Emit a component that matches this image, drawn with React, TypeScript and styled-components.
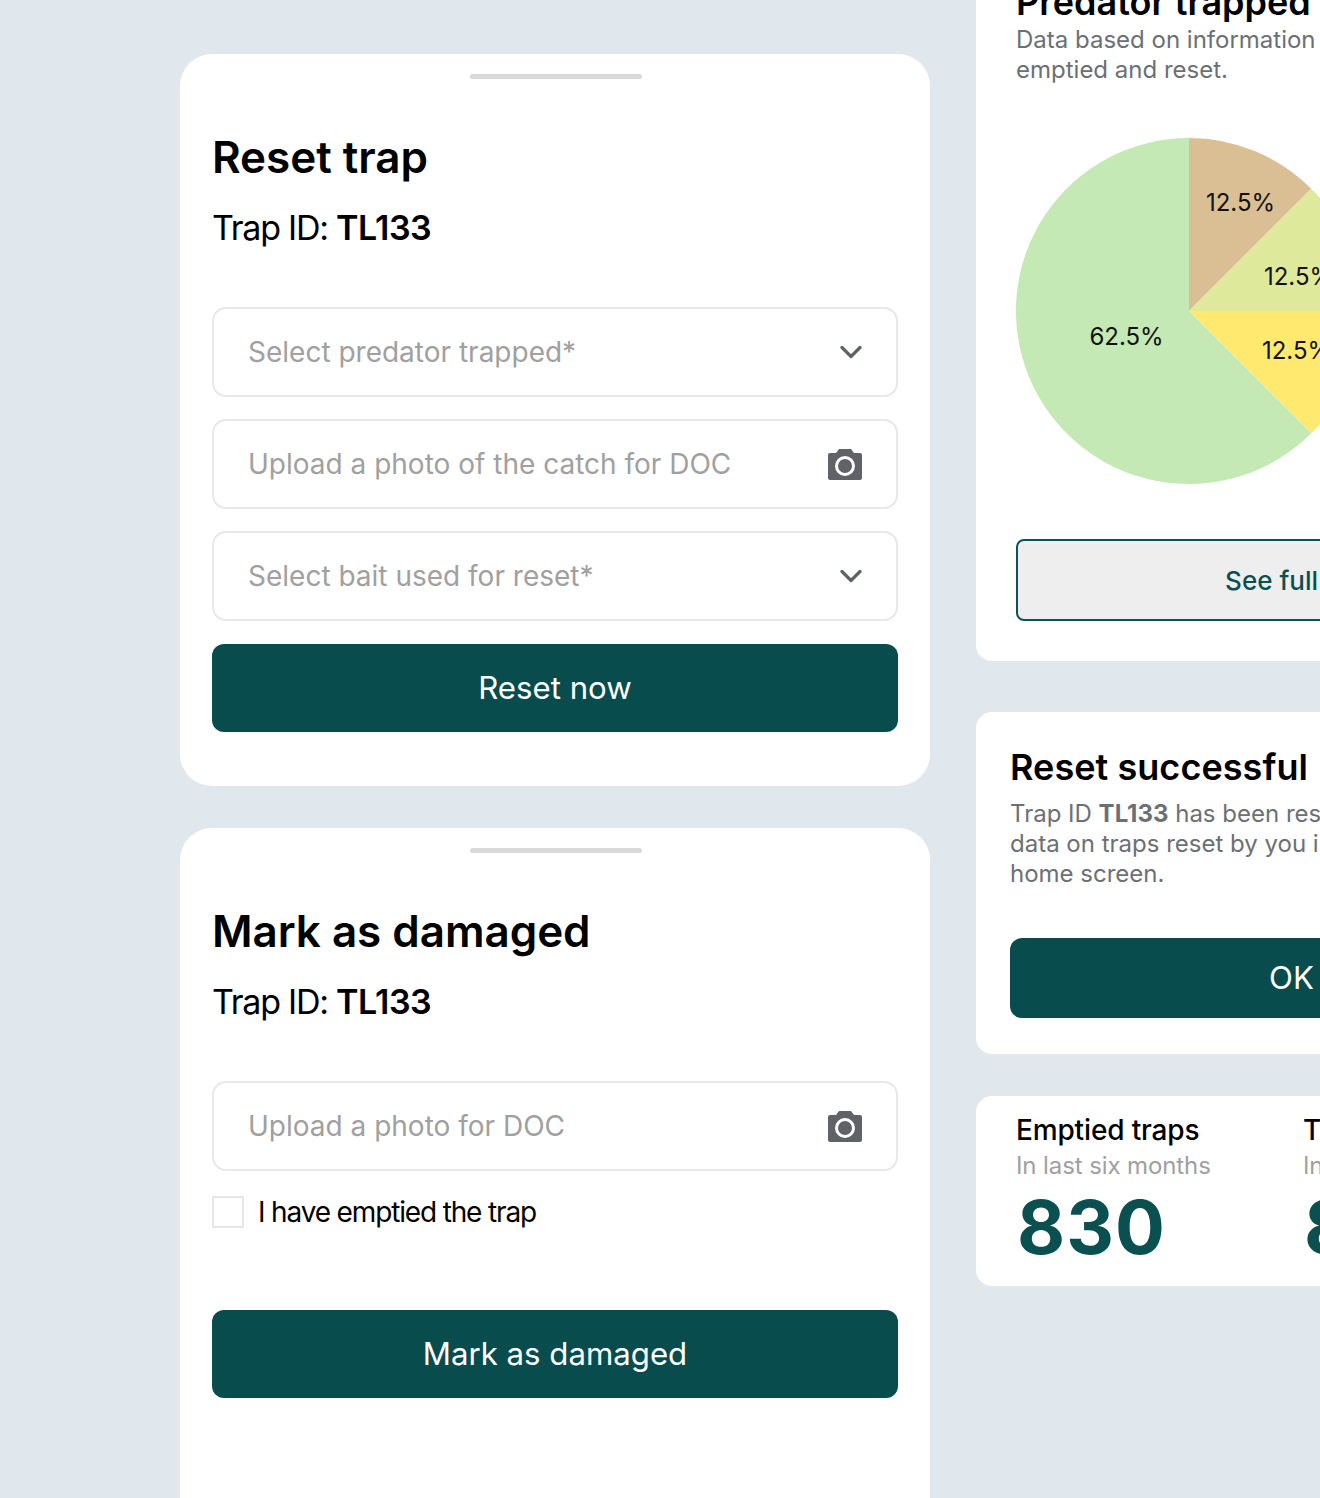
import React from "react"
import styled, { createGlobalStyle } from "styled-components"

const GlobalStyle = createGlobalStyle`
  html, body {
    margin: 0;
    background: #e0e8ee;
  }
  body {
    font-family: Inter, "Liberation Sans", sans-serif;
    color: #000;
  }
`

const Page = styled.div`
  display: flex;
  align-items: flex-start;
  gap: 46px;
  box-sizing: border-box;
  width: 1320px;
  height: 1498px;
  padding-left: 180px;
  overflow: hidden;
`

const LeftColumn = styled.div`
  display: flex;
  flex: none;
  flex-direction: column;
  gap: 42px;
  width: 750px;
  padding-top: 54px;
`

const Sheet = styled.section<{ $open?: boolean }>`
  box-sizing: border-box;
  min-height: ${props => (props.$open ? "760px" : "auto")};
  padding: 20px 32px 54px;
  background: #fff;
  border-radius: 32px;
`

const Handle = styled.div`
  width: 172px;
  height: 5px;
  margin-left: 258px;
  background: #d9d9d9;
  border-radius: 3px;
`

const SheetTitle = styled.h2`
  margin: 52px 0 0;
  font-size: 44px;
  font-weight: 600;
  line-height: 52px;
  letter-spacing: -0.05px;
`

const TrapId = styled.p`
  margin: 23px 0 57px;
  font-size: 34px;
  font-weight: 400;
  line-height: 44px;
  letter-spacing: -1.25px;

  b {
    font-weight: 600;
    letter-spacing: -0.55px;
  }
`

const Fields = styled.div`
  display: flex;
  flex-direction: column;
  gap: 24px;
`

const Field = styled.div`
  display: flex;
  align-items: center;
  justify-content: space-between;
  box-sizing: border-box;
  height: 90px;
  margin-bottom: -2px;
  padding: 0 34px;
  font-size: 28px;
  color: #a0a0a0;
  border: 2px solid #e8e8e8;
  border-radius: 14px;
`

const PrimaryButton = styled.div<{ $height: number; $width?: number; $top?: number }>`
  display: flex;
  flex: none;
  align-items: center;
  justify-content: center;
  box-sizing: border-box;
  width: ${props => (props.$width ? `${props.$width}px` : "100%")};
  height: ${props => props.$height}px;
  margin-top: ${props => props.$top ?? 0}px;
  font-size: 31.2px;
  color: #fff;
  background: #084c4e;
  border-radius: 12px;
`

const CheckRow = styled.label`
  display: flex;
  align-items: center;
  gap: 14px;
  height: 32px;
  margin-top: 27px;
  font-size: 28px;
  letter-spacing: -1.15px;
`

const CheckBox = styled.span`
  flex: none;
  box-sizing: border-box;
  width: 32px;
  height: 32px;
  border: 2px solid #e6e6e6;
`

const RightColumn = styled.div`
  display: flex;
  flex: none;
  flex-direction: column;
  gap: 51px;
  width: 680px;
  margin-top: -60px;
`

const ChartCard = styled.section`
  box-sizing: border-box;
  height: 721px;
  padding: 40px;
  background: #fff;
  border-radius: 16px;
`

const ChartTitle = styled.h2`
  margin: 0;
  font-size: 36px;
  font-weight: 600;
  line-height: 44px;
`

const Muted = styled.p`
  margin: 0;
  font-size: 24px;
  line-height: 30px;
  color: #6b7075;

  b {
    font-weight: 700;
  }
`

const ChartLead = styled(Muted)`
  margin-top: 1px;
`

const Pie = styled.svg`
  display: block;
  width: 346px;
  height: 346px;
  margin-top: 53px;
  overflow: visible;

  text {
    font-family: Inter, "Liberation Sans", sans-serif;
    font-size: 24px;
    fill: #111;
    text-anchor: middle;
  }
`

const OutlineButton = styled.div`
  display: flex;
  align-items: center;
  justify-content: center;
  box-sizing: border-box;
  width: 594px;
  height: 82px;
  margin-top: 55px;
  font-size: 26px;
  font-weight: 500;
  color: #0a5052;
  background: #eeeeee;
  border: 2px solid #0d5257;
  border-radius: 8px;
`

const SuccessCard = styled.section`
  display: flex;
  flex-direction: column;
  box-sizing: border-box;
  height: 342px;
  padding: 33px 34px;
  background: #fff;
  border-radius: 16px;
`

const SuccessTitle = styled.h2`
  margin: 0;
  font-size: 36px;
  font-weight: 600;
  line-height: 44px;
  letter-spacing: 0.05px;
`

const SuccessBody = styled(Muted)`
  margin-top: 10px;
`

const StatsCard = styled.section`
  display: flex;
  box-sizing: border-box;
  height: 190px;
  margin-top: -9px;
  padding: 17px 40px 0;
  background: #fff;
  border-radius: 16px;
`

const Stat = styled.div`
  flex: none;
  width: 287px;
`

const StatLabel = styled.div`
  font-size: 28px;
  font-weight: 500;
  line-height: 34px;
  letter-spacing: -0.15px;
`

const StatHint = styled.div`
  margin-top: 2px;
  font-size: 24px;
  line-height: 34px;
  letter-spacing: -0.1px;
  color: #a0a0a0;
`

const StatValue = styled.div`
  margin: -2px 0 0 1px;
  font-size: 74px;
  font-weight: 700;
  line-height: 92px;
  letter-spacing: 1px;
  color: #0a5050;
`

const Chevron = () => (
  <svg width="22" height="22" viewBox="0 0 22 22" fill="none">
    <path
      d="M2 6.5l9 9 9-9"
      stroke="#5f6368"
      strokeWidth="3.2"
      strokeLinecap="round"
      strokeLinejoin="round"
    />
  </svg>
)

const Camera = () => (
  <svg width="34" height="31" viewBox="0 0 34 31">
    <path
      d="M11 0h12l3 4h6a2 2 0 012 2v23a2 2 0 01-2 2H2a2 2 0 01-2-2V6a2 2 0 012-2h6z"
      fill="#5f6368"
    />
    <circle cx="17" cy="17" r="8.5" fill="none" stroke="#fff" strokeWidth="3" />
  </svg>
)

const slices = [
  { d: "M173 173V0A173 173 0 01295.3 50.7Z", color: "#dbbf94" },
  { d: "M173 173L295.3 50.7A173 173 0 01346 173Z", color: "#dfe99c" },
  { d: "M173 173H346A173 173 0 01295.3 295.3Z", color: "#ffe96e" },
  { d: "M173 173L295.3 295.3A173 173 0 11173 0Z", color: "#c4e9b4" }
]

const labels = [
  { x: 224.5, y: 73, value: "12.5%" },
  { x: 282.5, y: 147, value: "12.5%" },
  { x: 280.5, y: 221, value: "12.5%" },
  { x: 110.5, y: 207, value: "62.5%" }
]

export default function App() {
  return (
    <Page>
      <GlobalStyle />
      <LeftColumn>
        <Sheet>
          <Handle />
          <SheetTitle>Reset trap</SheetTitle>
          <TrapId>
            Trap ID: <b>TL133</b>
          </TrapId>
          <Fields>
            <Field>
              Select predator trapped*
              <Chevron />
            </Field>
            <Field>
              Upload a photo of the catch for DOC
              <Camera />
            </Field>
            <Field>
              Select bait used for reset*
              <Chevron />
            </Field>
            <PrimaryButton $height={88} $top={1}>
              Reset now
            </PrimaryButton>
          </Fields>
        </Sheet>
        <Sheet $open>
          <Handle />
          <SheetTitle>Mark as damaged</SheetTitle>
          <TrapId>
            Trap ID: <b>TL133</b>
          </TrapId>
          <Field>
            Upload a photo for DOC
            <Camera />
          </Field>
          <CheckRow>
            <CheckBox />I have emptied the trap
          </CheckRow>
          <PrimaryButton $height={88} $top={82}>
            Mark as damaged
          </PrimaryButton>
        </Sheet>
      </LeftColumn>
      <RightColumn>
        <ChartCard>
          <ChartTitle>Predator trapped</ChartTitle>
          <ChartLead>
            Data based on information from traps
            <br />
            emptied and reset.
          </ChartLead>
          <Pie viewBox="0 0 346 346">
            {slices.map(slice => (
              <path key={slice.color} d={slice.d} fill={slice.color} />
            ))}
            {labels.map(label => (
              <text key={label.x} x={label.x} y={label.y}>
                {label.value}
              </text>
            ))}
          </Pie>
          <OutlineButton>See full report</OutlineButton>
        </ChartCard>
        <SuccessCard>
          <SuccessTitle>Reset successful</SuccessTitle>
          <SuccessBody>
            Trap ID <b>TL133</b> has been reset. View the
            <br />
            data on traps reset by you in your
            <br />
            home screen.
          </SuccessBody>
          <PrimaryButton $height={80} $width={563} $top={49}>
            OK
          </PrimaryButton>
        </SuccessCard>
        <StatsCard>
          <Stat>
            <StatLabel>Emptied traps</StatLabel>
            <StatHint>In last six months</StatHint>
            <StatValue>830</StatValue>
          </Stat>
          <Stat>
            <StatLabel>Traps reset</StatLabel>
            <StatHint>In last six months</StatHint>
            <StatValue>830</StatValue>
          </Stat>
        </StatsCard>
      </RightColumn>
    </Page>
  )
}
